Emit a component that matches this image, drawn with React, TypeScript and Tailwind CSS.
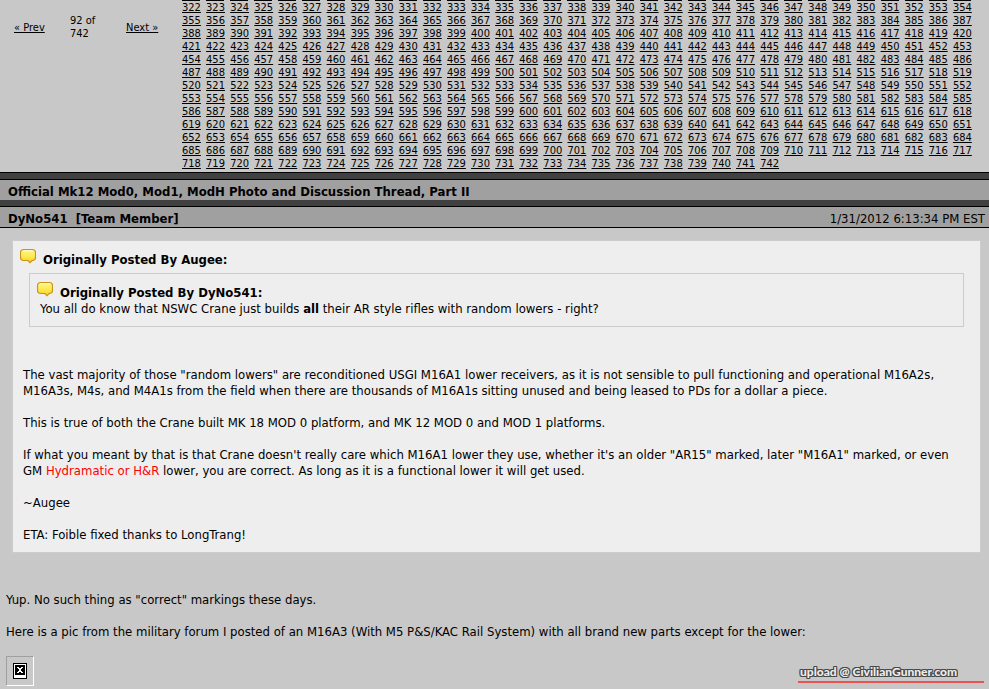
import React from 'react';

const FIRST_PAGE = 322;
const LAST_PAGE = 742;
const PER_ROW = 33;

const pages = Array.from({ length: LAST_PAGE - FIRST_PAGE + 1 }, (_, i) => FIRST_PAGE + i);

const SpeechBubble: React.FC<{ id: string }> = ({ id }) => (
  <svg className="w-4 h-4 shrink-0" viewBox="0 0 16 16" aria-hidden="true">
    <defs>
      <linearGradient id={id} x1="0" y1="0" x2="0" y2="1">
        <stop offset="0" stopColor="#fff68c" />
        <stop offset="0.5" stopColor="#fdea54" />
        <stop offset="1" stopColor="#f9d21c" />
      </linearGradient>
    </defs>
    <path
      d="M3.500 1.500h9a3 3 0 0 1 3 3v5a3 3 0 0 1-3 3h-.5L10 14.600 8 12.500H3.500a3 3 0 0 1-3-3v-5a3 3 0 0 1 3-3z"
      fill={`url(#${id})`}
      stroke="#c9921a"
      strokeWidth="1.2"
    />
    <path d="M3.500 2.700h9" stroke="#fffbc8" fill="none" />
  </svg>
);

const Pager: React.FC = () => (
  <nav className="flex items-start text-[11px] leading-[13px]" aria-label="Pages">
    <div className="flex items-center w-[182px] shrink-0 pt-[14px] pl-[14px]">
      <a href="#prev" className="w-14 underline">« Prev</a>
      <span className="w-14 pr-6">92 of 742</span>
      <a href="#next" className="underline">Next »</a>
    </div>
    <ul className="grid grid-cols-33 grow pr-3 pb-[2px]">
      {pages.map((page, i) => (
        <li key={page}>
          <a
            href={`#page-${page}`}
            className={i < PER_ROW ? 'block w-[18px] underline border-t border-black' : 'block w-[18px] underline'}
          >
            {page}
          </a>
        </li>
      ))}
    </ul>
  </nav>
);

const QuoteHeader: React.FC<{ id: string; author: string }> = ({ id, author }) => (
  <div className="flex items-start gap-[7px]">
    <SpeechBubble id={id} />
    <strong className="pt-1">Originally Posted By {author}:</strong>
  </div>
);

const App: React.FC = () => (
  <div className="min-h-screen bg-[#c8c8c8] text-black text-[13px] leading-4 font-['DejaVu_Sans_Condensed','DejaVu_Sans',sans-serif]">
    <Pager />

    <div className="h-2 bg-[#404040] border-y border-black" />
    <h1 className="h-5 pl-2 pt-1 bg-[#a0a0a0] font-bold">
      Official Mk12 Mod0, Mod1, ModH Photo and Discussion Thread, Part II
    </h1>
    <div className="h-[7px] bg-[#404040] border-b border-black" />
    <header className="flex justify-between h-[21px] pl-2 pr-1 pt-1 bg-[#a0a0a0] border-b border-black">
      <strong className="whitespace-pre">DyNo541  [Team Member]</strong>
      <time>1/31/2012 6:13:34 PM EST</time>
    </header>

    <article>
      <blockquote className="mt-3 ml-3 mr-2 pt-[7px] pl-[7px] pr-4 pb-[9px] bg-[#eeeeee] border border-[#cccccc]">
        <QuoteHeader id="bubble-outer" author="Augee" />
        <blockquote className="mt-[5px] ml-[9px] pt-[7px] px-[7px] pb-[9px] border border-[#cccccc]">
          <QuoteHeader id="bubble-inner" author="DyNo541" />
          <p className="pl-[3px]">
            You all do know that NSWC Crane just builds <b>all</b> their AR style rifles with random lowers - right?
          </p>
        </blockquote>
        <div className="pl-[3px] mt-10 space-y-4">
          <p>
            The vast majority of those "random lowers" are reconditioned USGI M16A1 lower receivers, as it is not
            sensible to pull functioning and operational M16A2s, M16A3s, M4s, and M4A1s from the field when there are
            thousands of M16A1s sitting unused and being leased to PDs for a dollar a piece.
          </p>
          <p>This is true of both the Crane built MK 18 MOD 0 platform, and MK 12 MOD 0 and MOD 1 platforms.</p>
          <p>
            If what you meant by that is that Crane doesn't really care which M16A1 lower they use, whether it's an
            older "AR15" marked, later "M16A1" marked, or even GM{' '}
            <span className="text-[#ff0000]">Hydramatic or H&amp;R</span> lower, you are correct. As long as it is a
            functional lower it will get used.
          </p>
          <p>~Augee</p>
          <p>ETA: Foible fixed thanks to LongTrang!</p>
        </div>
      </blockquote>

      <div className="pl-[6px] pt-[39px] space-y-4">
        <p>Yup. No such thing as "correct" markings these days.</p>
        <p>
          Here is a pic from the military forum I posted of an M16A3 (With M5 P&amp;S/KAC Rail System) with all brand
          new parts except for the lower:
        </p>
      </div>

      <div className="flex justify-between items-start pl-[6px] pr-[5px] pt-4">
        <div
          className="p-[6px] border border-t-[#a0a0a0] border-l-[#a0a0a0] border-r-white border-b-white"
          role="img"
          aria-label="Missing image"
        >
          <svg className="w-[14px] h-4" viewBox="0 0 14 16" shapeRendering="crispEdges" aria-hidden="true">
            <path d="M0 0h14v16H0z" fill="#000" />
            <path d="M1 1h12v14H1z" fill="#fff" />
            <path d="M2 2h10v10H2z" fill="#000" />
            <path d="M4 4h2v1h2V4h2v1H9v1H8v2h1v1h1v1H8V9H6v1H4V9h1V8h1V6H5V5H4z" fill="#fff" />
          </svg>
        </div>
        <a
          href="#upload"
          className="w-[186px] mt-[9px] pl-[2px] pb-[2px] border-b-2 border-[#e95353] text-xs leading-[14px] font-black text-[#eeeeee] font-['Lato',sans-serif] [text-shadow:1px_0_#484848,-1px_0_#484848,0_1px_#484848,0_-1px_#484848,1px_1px_#484848,-1px_-1px_#484848,1px_-1px_#484848,-1px_1px_#484848]"
        >
          upload @ CivilianGunner.com
        </a>
      </div>
    </article>
  </div>
);

export default App;
